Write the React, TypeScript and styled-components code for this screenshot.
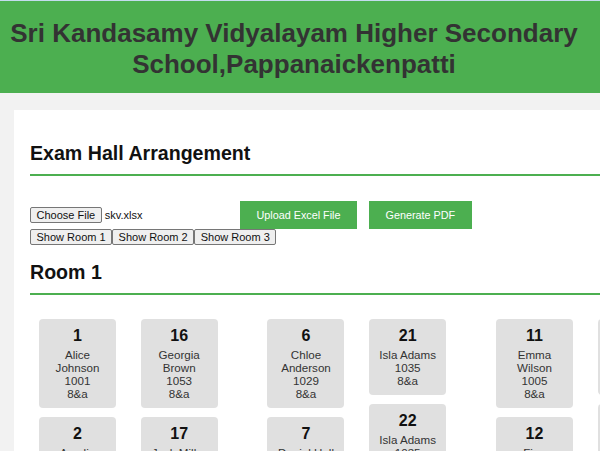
import * as React from "react";
import styled, { createGlobalStyle } from "styled-components";

const GlobalStyle = createGlobalStyle`
  html, body {
    margin: 0;
    padding: 0;
    overflow: hidden;
    background-color: #f2f2f2;
    font-family: "Liberation Sans", Arial, sans-serif;
  }
`;

const Header = styled.header`
  background-color: #4caf50;
  border-top: 1px solid #c4dcef;
  padding: 17px 12px 13px 0;
  & > h1 {
    margin: 0;
    font-size: 26px;
    line-height: 31.2px;
    font-weight: bold;
    color: #333;
    text-align: center;
  }
`;

const Container = styled.main`
  background-color: white;
  margin: 17px 0 0 14px;
  padding: 16px;
  width: 900px;
  min-height: 600px;
`;

const SectionTitle = styled.h2<{ $top?: number }>`
  margin: ${(p) => p.$top ?? 16}px 0 24px;
  padding-bottom: 9px;
  border-bottom: 2px solid #4caf50;
  font-size: 19.6px;
  font-weight: bold;
  color: #111;
`;

const UploadRow = styled.div`
  display: flex;
  align-items: center;
  height: 29px;
`;

const FileInput = styled.div`
  display: flex;
  align-items: center;
  width: 210px;
  font-size: 11px;
  color: #111;
  & > span {
    margin-left: 3px;
  }
`;

const NativeButton = styled.button`
  font-family: "Liberation Sans", Arial, sans-serif;
  font-size: 11px;
  line-height: 12px;
  color: #111;
  background-color: #efefef;
  border: 1px solid #767676;
  border-radius: 2px;
  padding: 1px 5.5px;
  margin: 0;
`;

const ActionButton = styled.button`
  font-family: "Liberation Sans", Arial, sans-serif;
  font-size: 10.8px;
  line-height: 12.6px;
  color: white;
  background-color: #4caf50;
  border: none;
  border-radius: 0;
  padding: 8px 16.5px;
  margin: 0 12px 0 0;
`;

const RoomTabs = styled.div`
  display: flex;
`;

const RoomGrid = styled.div`
  display: flex;
  align-items: flex-start;
  gap: 49.8px;
  padding-left: 9px;
`;

const Bench = styled.div`
  display: flex;
  align-items: flex-start;
  gap: 24.7px;
`;

const SeatColumn = styled.div`
  display: flex;
  flex-direction: column;
  gap: 9px;
`;

const SeatCard = styled.div`
  width: 77px;
  box-sizing: border-box;
  padding: 8px;
  background-color: #e0e0e0;
  border-radius: 4px;
  text-align: center;
  font-size: 11.6px;
  color: #333;
  & > .seat {
    font-size: 16px;
    font-weight: bold;
    color: #111;
    margin-bottom: 3px;
  }
`;

interface Seat {
  no: number;
  name: string;
  roll: string;
  section: string;
}

const seat = (no: number, name: string, roll: string): Seat => ({
  no,
  name,
  roll,
  section: "8&a",
});

const benches: Seat[][][] = [
  [
    [seat(1, "Alice Johnson", "1001"), seat(2, "Amelia Clark", "1002"), seat(3, "Ben Taylor", "1003")],
    [seat(16, "Georgia Brown", "1053"), seat(17, "Jack Miller", "1054"), seat(18, "Harry Scott", "1055")],
  ],
  [
    [seat(6, "Chloe Anderson", "1029"), seat(7, "Daniel Hall", "1030"), seat(8, "Ethan Young", "1031")],
    [seat(21, "Isla Adams", "1035"), seat(22, "Isla Adams", "1035"), seat(23, "Jacob King", "1036")],
  ],
  [
    [seat(11, "Emma Wilson", "1005"), seat(12, "Finn Walker", "1006"), seat(13, "Grace Lewis", "1007")],
    [seat(26, "Lily Turner", "1040"), seat(27, "Mason Green", "1041"), seat(28, "Noah White", "1042")],
  ],
];

const SeatBox = ({ s }: { s: Seat }): React.ReactElement => (
  <SeatCard>
    <div className="seat">{s.no}</div>
    <div>{s.name}</div>
    <div>{s.roll}</div>
    <div>{s.section}</div>
  </SeatCard>
);

export default function App(): React.ReactElement {
  return (
    <>
      <GlobalStyle />
      <Header>
        <h1>Sri Kandasamy Vidyalayam Higher Secondary School,Pappanaickenpatti</h1>
      </Header>
      <Container>
        <SectionTitle>Exam Hall Arrangement</SectionTitle>
        <UploadRow>
          <FileInput>
            <NativeButton>Choose File</NativeButton>
            <span>skv.xlsx</span>
          </FileInput>
          <ActionButton>Upload Excel File</ActionButton>
          <ActionButton>Generate PDF</ActionButton>
        </UploadRow>
        <RoomTabs>
          <NativeButton>Show Room 1</NativeButton>
          <NativeButton>Show Room 2</NativeButton>
          <NativeButton>Show Room 3</NativeButton>
        </RoomTabs>
        <SectionTitle $top={16}>Room 1</SectionTitle>
        <RoomGrid>
          {benches.map((bench, i) => (
            <Bench key={i}>
              {bench.map((col, j) => (
                <SeatColumn key={j}>
                  {col.map((s) => (
                    <SeatBox key={s.no} s={s} />
                  ))}
                </SeatColumn>
              ))}
            </Bench>
          ))}
        </RoomGrid>
      </Container>
    </>
  );
}
